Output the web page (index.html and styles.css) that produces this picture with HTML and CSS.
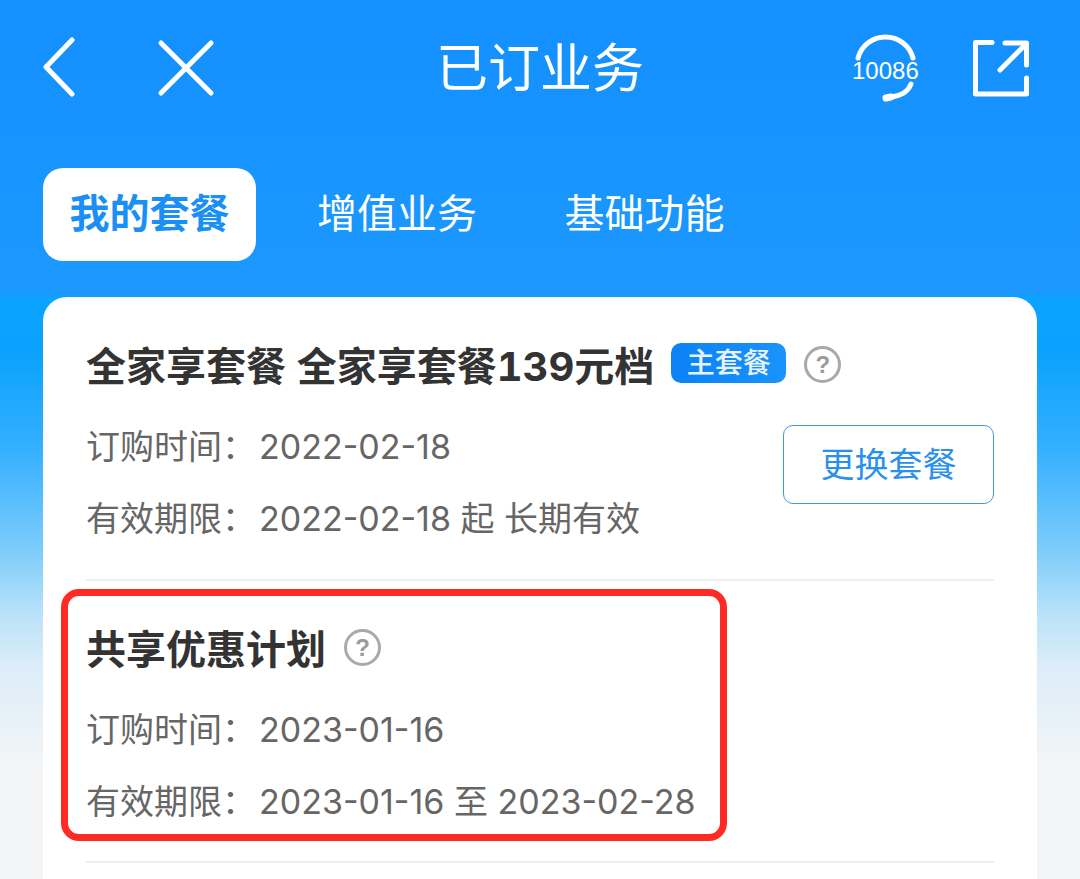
FILE: index.html
```html
<!DOCTYPE html>
<html lang="zh-CN">
<head>
    <meta charset="UTF-8">
    <title>已订业务</title>
    <link rel="stylesheet" href="styles.css">
</head>
<body>
    <div class="page">
        <header class="top-bar">
            <div class="top-left">
                <svg class="icon-back" width="34" height="62" viewBox="0 0 34 62">
                    <path d="M29 3 L3 30 L29 57" />
                </svg>
                <svg class="icon-close" width="58" height="58" viewBox="0 0 58 58">
                    <path d="M4 4 L54 54 M54 4 L4 54" />
                </svg>
            </div>
            <h1 class="page-title">已订业务</h1>
            <div class="top-right">
                <div class="hotline">
                    <svg width="70" height="70" viewBox="0 0 70 70">
                        <path d="M8 25 A28.5 28.5 0 0 1 63 25" />
                        <path d="M61 51 Q57 62 41 64" />
                        <path class="mic" d="M36 65 L41 64" />
                    </svg>
                    <span class="hotline-num">10086</span>
                </div>
                <svg class="icon-share" width="58" height="58" viewBox="0 0 58 58">
                    <path d="M20 3.5 H3.5 V55 H54.5 V39" />
                    <path d="M33 4 H54.5 V26" />
                    <path d="M53 6 L28 31" />
                </svg>
            </div>
        </header>

        <nav class="tabs">
            <a class="tab active">我的套餐</a>
            <a class="tab">增值业务</a>
            <a class="tab">基础功能</a>
        </nav>

        <main class="card">
            <section class="plan">
                <div class="plan-title">
                    <h2>全家享套餐 全家享套餐139元档</h2>
                    <span class="badge">主套餐</span>
                    <span class="help">?</span>
                </div>
                <div class="plan-body">
                    <div class="plan-info">
                        <p><span class="label">订购时间：</span>2022-02-18</p>
                        <p><span class="label">有效期限：</span>2022-02-18 起 长期有效</p>
                    </div>
                    <button class="change-btn">更换套餐</button>
                </div>
            </section>

            <section class="plan plan-marked">
                <div class="mark-box">
                    <div class="plan-title">
                        <h2>共享优惠计划</h2>
                        <span class="help">?</span>
                    </div>
                    <div class="plan-info">
                        <p><span class="label">订购时间：</span>2023-01-16</p>
                        <p><span class="label">有效期限：</span>2023-01-16 至 2023-02-28</p>
                    </div>
                </div>
            </section>
        </main>
    </div>
</body>
</html>
```

FILE: styles.css
```css
body {
    margin: 0;
    font-family: Inter, "Noto Sans CJK SC", sans-serif;
    background-color: #f5f6f8;
}

.page {
    height: 879px;
    overflow: hidden;
    padding: 0 43px;
    background: linear-gradient(#1490ff 0, #1c98ff 295px, #0aa3ff 295px, #0aa2fc 350px, #35b0ff 450px, #7dccfb 550px, #bce3f9 617px, #dcedf8 667px, #f4f5f7 770px);
}

.top-bar {
    height: 136px;
    display: flex;
    align-items: center;
    justify-content: space-between;
    position: relative;
}

.top-bar svg path {
    fill: none;
    stroke: #fff;
    stroke-width: 5;
    stroke-linecap: round;
    stroke-linejoin: round;
}

.top-bar svg .mic {
    stroke-width: 7;
}

.top-left {
    display: flex;
    align-items: center;
    gap: 80px;
}

.top-right {
    display: flex;
    align-items: center;
    gap: 52px;
    margin-right: 7px;
}

.page-title {
    margin: 0;
    color: #fff;
    font-size: 52px;
    font-weight: 400;
    position: absolute;
    left: 393px;
    top: 37px;
    line-height: 64px;
}

.hotline {
    position: relative;
    width: 70px;
    height: 70px;
}

.hotline-num {
    position: absolute;
    left: 2px;
    top: 25px;
    color: #fff;
    font-family: "Liberation Sans", sans-serif;
    font-size: 24px;
    line-height: 26px;
}

.tabs {
    display: flex;
    align-items: center;
    gap: 34.5px;
    margin-top: 32px;
    height: 93px;
}

.tab {
    color: #fff;
    font-size: 40px;
    line-height: 91px;
    padding: 0 26.5px 2px;
}

.tab.active {
    background-color: #fff;
    color: #1a8ff5;
    font-weight: 700;
    border-radius: 20px;
}

.card {
    margin-top: 36px;
    height: 640px;
    background-color: #fff;
    border-radius: 24px 24px 0 0;
    padding: 0 43px;
}

.plan {
    height: 284px;
    box-sizing: border-box;
    border-bottom: 2px solid #eeeeee;
    padding-top: 38px;
}

.plan-title {
    display: flex;
    align-items: center;
    height: 58px;
}

.plan-title h2 {
    margin: 0;
    font-size: 40px;
    font-weight: 700;
    font-variant-numeric: tabular-nums;
    color: #333;
    white-space: nowrap;
}

.badge {
    margin-left: 17px;
    margin-top: -3px;
    background: linear-gradient(90deg, #0a82f5, #1a93fb);
    color: #e8f3ff;
    font-size: 28px;
    font-weight: 500;
    line-height: 40px;
    padding: 0 15.5px;
    border-radius: 10px;
}

.help {
    margin-left: 18px;
    width: 31px;
    height: 31px;
    border: 3px solid #a9a9a9;
    border-radius: 50%;
    color: #9a9a9a;
    font-family: "Liberation Sans", sans-serif;
    font-size: 24px;
    font-weight: 700;
    line-height: 31px;
    text-align: center;
}

.plan-body {
    display: flex;
    align-items: flex-start;
    justify-content: space-between;
}

.plan-info p {
    margin: 0;
    color: #666;
    font-size: 34px;
    line-height: 72px;
    white-space: nowrap;
}

.plan-info {
    padding-top: 18px;
}

.label {
    margin-right: 3px;
}

.change-btn {
    margin-top: 32px;
    width: 211px;
    height: 79px;
    padding-bottom: 6px;
    background-color: #fff;
    border: 1.5px solid #3f9ae6;
    border-radius: 10px;
    color: #2a90ee;
    font-family: inherit;
    font-size: 34px;
}

.plan-marked {
    position: relative;
    height: 282px;
    padding-top: 0;
}

.mark-box {
    position: absolute;
    left: -25px;
    top: 8px;
    width: 666px;
    height: 252px;
    box-sizing: border-box;
    border: 7px solid #fe2a23;
    border-radius: 18px;
    padding: 22px 18px 0;
}
```
